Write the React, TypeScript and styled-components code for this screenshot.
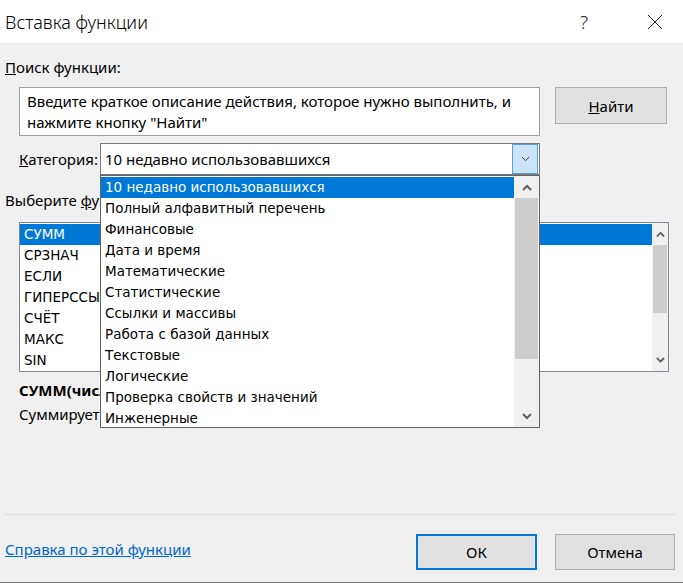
import React from 'react';
import styled, { createGlobalStyle } from 'styled-components';

const GlobalStyle = createGlobalStyle`
  html, body {
    margin: 0;
    padding: 0;
    background: #f0f0f0;
  }
  body {
    font-family: 'Noto Sans', 'Liberation Sans', sans-serif;
    color: #000;
  }
`;

const Dialog = styled.div`
  width: 683px;
  height: 582px;
  display: flex;
  flex-direction: column;
  background: #f0f0f0;
  border-bottom: 1px solid #7a7a7a;
  overflow: hidden;
`;

const TitleBar = styled.div`
  height: 43px;
  background: #fff;
  display: flex;
  align-items: center;
  padding-left: 5px;
`;

const Title = styled.span`
  flex: 1;
  font-size: 18px;
  font-weight: 300;
`;

const TitleIcon = styled.span<{ $right: number }>`
  width: 46px;
  display: flex;
  justify-content: center;
  align-items: center;
  font-size: 19px;
  font-weight: 300;
  color: #222;
  margin-right: ${(p) => p.$right}px;
`;

const Content = styled.div`
  flex: 1;
  display: flex;
  flex-direction: column;
  padding: 14px 8px 0 5px;
  font-size: 15px;
`;

const Label = styled.div<{ $top?: number }>`
  line-height: 20px;
  height: 20px;
  margin-top: ${(p) => p.$top ?? 0}px;
  white-space: nowrap;
`;

const Indented = styled.div`
  margin-left: 14px;
`;

const SearchRow = styled(Indented)`
  display: flex;
  align-items: flex-start;
  margin-top: 10px;
`;

const SearchBox = styled.div`
  width: 521px;
  height: 49px;
  box-sizing: border-box;
  background: #fff;
  border: 1px solid #a0a0a0;
  padding: 3px 7px;
  line-height: 21px;
  font-size: 15px;
  color: #000;
`;

const Button = styled.button<{ $w: number; $default?: boolean }>`
  width: ${(p) => p.$w}px;
  height: 36px;
  box-sizing: border-box;
  background: #e1e1e1;
  border: ${(p) => (p.$default ? '2px solid #0078d7' : '1px solid #adadad')};
  font-family: inherit;
  font-size: 15px;
  color: #000;
  padding: 0;
`;

const FindButton = styled(Button)`
  margin-left: 15px;
  height: 37px;
`;

const CategoryRow = styled(Indented)`
  display: flex;
  align-items: center;
  margin-top: 7px;
`;

const CategoryLabel = styled.span`
  width: 81px;
`;

const SelectWrap = styled.div`
  position: relative;
  width: 440px;
  height: 32px;
`;

const SelectBox = styled.div`
  height: 32px;
  box-sizing: border-box;
  background: #fff;
  border: 1px solid #7a7a7a;
  display: flex;
  align-items: center;
  padding-left: 4px;
  font-size: 15px;
`;

const SelectText = styled.span`
  flex: 1;
`;

const SelectArrow = styled.div`
  width: 26px;
  height: 30px;
  box-sizing: border-box;
  background: #cce4f7;
  border: 1px solid #569de5;
  display: flex;
  align-items: center;
  justify-content: center;
  margin-right: 1px;
`;

const DropList = styled.div`
  position: absolute;
  top: 32px;
  left: 0;
  width: 440px;
  height: 253px;
  box-sizing: border-box;
  background: #fff;
  border: 1px solid #646464;
  display: flex;
  z-index: 10;
  font-family: 'DejaVu Sans', 'Noto Sans', sans-serif;
  font-size: 13.5px;
`;

const Items = styled.div`
  flex: 1;
  padding-top: 1px;
  overflow: hidden;
`;

const Item = styled.div<{ $selected?: boolean }>`
  height: 21px;
  line-height: 21px;
  padding-left: 4px;
  white-space: nowrap;
  overflow: hidden;
  background: ${(p) => (p.$selected ? '#0078d7' : 'transparent')};
  color: ${(p) => (p.$selected ? '#fff' : '#000')};
`;

const ScrollBar = styled.div<{ $w: number }>`
  width: ${(p) => p.$w}px;
  background: #f0f0f0;
  display: flex;
  flex-direction: column;
  align-items: center;
`;

const ScrollArrow = styled.div`
  height: 22px;
  width: 100%;
  display: flex;
  align-items: center;
  justify-content: center;
`;

const Thumb = styled.div<{ $h: number }>`
  width: calc(100% - 2px);
  height: ${(p) => p.$h}px;
  background: #cdcdcd;
`;

const Spacer = styled.div`
  flex: 1;
`;

const FuncList = styled(Indented)`
  margin-top: 12px;
  width: 650px;
  height: 150px;
  box-sizing: border-box;
  background: #fff;
  border: 1px solid #828790;
  display: flex;
  font-family: 'DejaVu Sans', 'Noto Sans', sans-serif;
  font-size: 13.5px;
`;

const Signature = styled(Indented)`
  margin-top: 8px;
  line-height: 20px;
  font-weight: 700;
`;

const Description = styled(Indented)`
  margin-top: 4px;
  line-height: 20px;
`;

const Separator = styled.div`
  margin-top: auto;
  height: 1px;
  background: #dcdcdc;
`;

const Footer = styled.div`
  display: flex;
  align-items: center;
  height: 35px;
  margin: 19px 0 13px;
`;

const HelpLink = styled.a`
  flex: 1;
  color: #0066cc;
  text-decoration: underline;
  font-size: 15px;
  padding-bottom: 6px;
  cursor: pointer;
`;

const FooterButtons = styled.div`
  display: flex;
  gap: 18px;
`;

const Chevron: React.FC<{ dir: 'up' | 'down'; color?: string; w?: number; thin?: boolean }> = ({
  dir,
  color = '#606060',
  w = 10,
  thin,
}) => (
  <svg width={w} height={w / 2 + 2} viewBox="0 0 10 7">
    <polyline
      points={dir === 'up' ? '1,6 5,2 9,6' : '1,1 5,5 9,1'}
      fill="none"
      stroke={color}
      strokeWidth={thin ? 1 : 2}
    />
  </svg>
);

const categories = [
  '10 недавно использовавшихся',
  'Полный алфавитный перечень',
  'Финансовые',
  'Дата и время',
  'Математические',
  'Статистические',
  'Ссылки и массивы',
  'Работа с базой данных',
  'Текстовые',
  'Логические',
  'Проверка свойств и значений',
  'Инженерные',
];

const functions = ['СУММ', 'СРЗНАЧ', 'ЕСЛИ', 'ГИПЕРССЫЛКА', 'СЧЁТ', 'МАКС', 'SIN'];

export default function App() {
  return (
    <Dialog>
      <GlobalStyle />
      <TitleBar>
        <Title>Вставка функции</Title>
        <TitleIcon $right={25}>?</TitleIcon>
        <TitleIcon $right={5}>
          <svg width="16" height="16" viewBox="0 0 16 16">
            <path d="M1 1 L15 15 M15 1 L1 15" stroke="#222" strokeWidth="1" />
          </svg>
        </TitleIcon>
      </TitleBar>
      <Content>
        <Label>
          <u>П</u>оиск функции:
        </Label>
        <SearchRow>
          <SearchBox>
            Введите краткое описание действия, которое нужно выполнить, и нажмите кнопку "Найти"
          </SearchBox>
          <FindButton $w={112}>
            <u>Н</u>айти
          </FindButton>
        </SearchRow>
        <CategoryRow>
          <CategoryLabel>
            <u>К</u>атегория:
          </CategoryLabel>
          <SelectWrap>
            <SelectBox>
              <SelectText>10 недавно использовавшихся</SelectText>
              <SelectArrow>
                <Chevron dir="down" color="#333" w={9} thin />
              </SelectArrow>
            </SelectBox>
            <DropList>
              <Items>
                {categories.map((c, i) => (
                  <Item key={c} $selected={i === 0}>
                    {c}
                  </Item>
                ))}
              </Items>
              <ScrollBar $w={25}>
                <ScrollArrow>
                  <Chevron dir="up" />
                </ScrollArrow>
                <Thumb $h={161} />
                <Spacer />
                <ScrollArrow>
                  <Chevron dir="down" />
                </ScrollArrow>
              </ScrollBar>
            </DropList>
          </SelectWrap>
        </CategoryRow>
        <Label $top={15}>
          Выберите <u>ф</u>ункцию:
        </Label>
        <FuncList>
          <Items>
            {functions.map((f, i) => (
              <Item key={f} $selected={i === 0}>
                {f}
              </Item>
            ))}
          </Items>
          <ScrollBar $w={16}>
            <ScrollArrow>
              <Chevron dir="up" w={9} />
            </ScrollArrow>
            <Thumb $h={68} />
            <Spacer />
            <ScrollArrow>
              <Chevron dir="down" w={9} />
            </ScrollArrow>
          </ScrollBar>
        </FuncList>
        <Signature>СУММ(число1;число2;...)</Signature>
        <Description>Суммирует аргументы.</Description>
        <Separator />
        <Footer>
          <HelpLink>Справка по этой функции</HelpLink>
          <FooterButtons>
            <Button $w={121} $default>
              ОК
            </Button>
            <Button $w={120}>Отмена</Button>
          </FooterButtons>
        </Footer>
      </Content>
    </Dialog>
  );
}
